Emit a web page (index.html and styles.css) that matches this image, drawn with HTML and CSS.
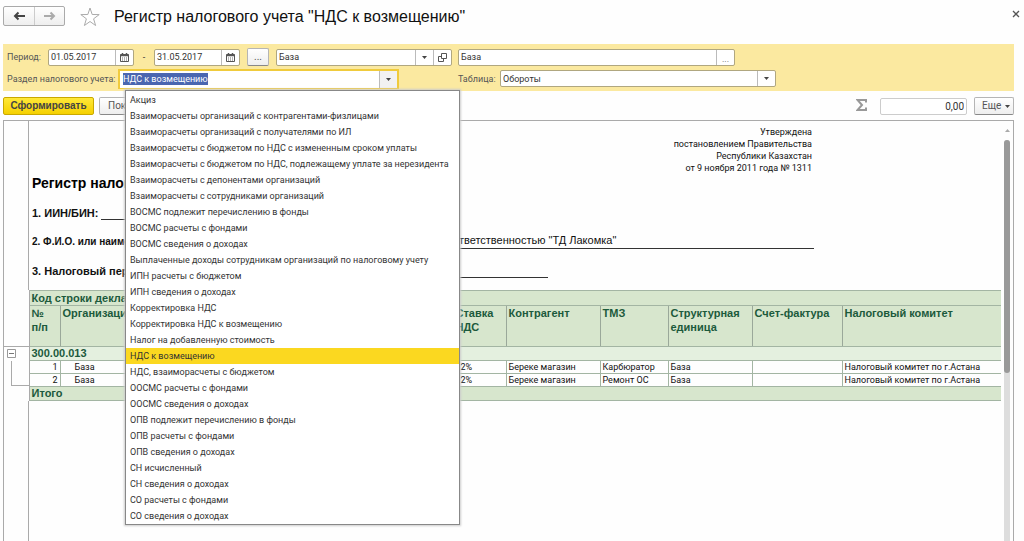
FILE: index.html
```html
<!DOCTYPE html>
<html lang="ru">
<head>
<meta charset="utf-8">
<title>Регистр налогового учета "НДС к возмещению"</title>
<link rel="stylesheet" href="styles.css">
</head>
<body>
<header class="titlebar">
  <div class="nav">
    <button class="nav-btn" aria-label="Назад"><svg width="12" height="10" viewBox="0 0 12 10"><path d="M12 5H3M5.500 1.500L2 5l3.500 3.500" fill="none" stroke="#444" stroke-width="2"/></svg></button>
    <button class="nav-btn" aria-label="Вперед"><svg width="12" height="10" viewBox="0 0 12 10"><path d="M0 5H9M6.500 1.500L10 5l-3.500 3.500" fill="none" stroke="#aaa" stroke-width="2"/></svg></button>
  </div>
  <button class="plain star" aria-label="В избранное"><svg width="20" height="19" viewBox="0 0 20 19"><path d="M10 1l2.200 6.500 7 .1-5.600 4.200 2 6.700-5.600-4-5.600 4 2-6.700L.8 7.600l7-.1z" fill="#fff" stroke="#aaa"/></svg></button>
  <h1 class="title">Регистр налогового учета "НДС к возмещению"</h1>
  <button class="plain close" aria-label="Закрыть"><svg width="8" height="8" viewBox="0 0 8 8"><path d="M1 1l6 6M7 1L1 7" stroke="#555" stroke-width="1.300"/></svg></button>
</header>

<main class="page">
  <form class="filters">
    <div class="row">
      <div class="side">
        <label class="period-label" for="from">Период:</label>
        <div class="field date"><input id="from" type="text" value="01.05.2017"><button type="button" aria-label="Календарь"><svg width="9" height="9" viewBox="0 0 9 9"><path d="M.5 1.500h8v7h-8z" fill="#fff" stroke="#555"/><path d="M0 2.500h9M2.500 0v2M6.500 0v2" stroke="#555" stroke-width="1.500"/><path d="M2 5h5M2 7h5" stroke="#666" stroke-dasharray="1 1"/></svg></button></div>
        <span class="dash">-</span>
        <div class="field date"><input aria-label="Конец периода" type="text" value="31.05.2017"><button type="button" aria-label="Календарь"><svg width="9" height="9" viewBox="0 0 9 9"><path d="M.5 1.500h8v7h-8z" fill="#fff" stroke="#555"/><path d="M0 2.500h9M2.500 0v2M6.500 0v2" stroke="#555" stroke-width="1.500"/><path d="M2 5h5M2 7h5" stroke="#666" stroke-dasharray="1 1"/></svg></button></div>
        <button type="button" class="btn dots">...</button>
        <div class="field org"><input aria-label="Организация" type="text" value="База"><button type="button" aria-label="Выбрать"><svg width="5" height="3" viewBox="0 0 5 3"><path d="M0 0h5L2.500 3z" fill="#444"/></svg></button><button type="button" aria-label="Открыть"><svg width="9" height="9" viewBox="0 0 9 9"><path d="M3.500.5h5v5h-5zM3.500 3.500h-3v5h5v-3" fill="none" stroke="#555"/></svg></button></div>
      </div>
      <div class="field unit"><input aria-label="Подразделение" type="text" value="База"><button type="button" class="low">...</button></div>
    </div>
    <div class="row">
      <div class="side">
        <label class="section-label" for="section">Раздел налогового учета:</label>
        <div class="combo">
          <div class="focus-box"><input id="section" type="text" value="НДС к возмещению"><button type="button" aria-label="Список"><svg width="5" height="3" viewBox="0 0 5 3"><path d="M0 0h5L2.500 3z" fill="#444"/></svg></button></div>
          <ul class="menu" role="listbox" aria-label="Раздел налогового учета">
            <li role="option">Акциз</li>
            <li role="option">Взаиморасчеты организаций с контрагентами-физлицами</li>
            <li role="option">Взаиморасчеты организаций с получателями по ИЛ</li>
            <li role="option">Взаиморасчеты с бюджетом по НДС с измененным сроком уплаты</li>
            <li role="option">Взаиморасчеты с бюджетом по НДС, подлежащему уплате за нерезидента</li>
            <li role="option">Взаиморасчеты с депонентами организаций</li>
            <li role="option">Взаиморасчеты с сотрудниками организаций</li>
            <li role="option">ВОСМС подлежит перечислению в фонды</li>
            <li role="option">ВОСМС расчеты с фондами</li>
            <li role="option">ВОСМС сведения о доходах</li>
            <li role="option">Выплаченные доходы сотрудникам организаций по налоговому учету</li>
            <li role="option">ИПН расчеты с бюджетом</li>
            <li role="option">ИПН сведения о доходах</li>
            <li role="option">Корректировка НДС</li>
            <li role="option">Корректировка НДС к возмещению</li>
            <li role="option">Налог на добавленную стоимость</li>
            <li role="option" class="current" aria-selected="true">НДС к возмещению</li>
            <li role="option">НДС, взаиморасчеты с бюджетом</li>
            <li role="option">ООСМС расчеты с фондами</li>
            <li role="option">ООСМС сведения о доходах</li>
            <li role="option">ОПВ подлежит перечислению в фонды</li>
            <li role="option">ОПВ расчеты с фондами</li>
            <li role="option">ОПВ сведения о доходах</li>
            <li role="option">СН исчисленный</li>
            <li role="option">СН сведения о доходах</li>
            <li role="option">СО расчеты с фондами</li>
            <li role="option">СО сведения о доходах</li>
          </ul>
        </div>
      </div>
      <label class="table-label" for="table">Таблица:</label>
      <div class="field kind"><select id="table"><option>Обороты</option></select><span class="arrow"><svg width="5" height="3" viewBox="0 0 5 3"><path d="M0 0h5L2.500 3z" fill="#444"/></svg></span></div>
    </div>
  </form>

  <div class="toolbar">
    <button class="btn primary">Сформировать</button>
    <button class="btn">Показать</button>
    <svg class="sigma" width="11" height="12" viewBox="0 0 11 12"><path d="M10 3.500V1H1.500L6 6l-4.500 5H10V8.500" fill="none" stroke="#999" stroke-width="2"/></svg>
    <input class="sum" aria-label="Сумма" type="text" value="0,00">
    <button class="btn more">Еще <svg width="5" height="3" viewBox="0 0 5 3"><path d="M0 0h5L2.500 3z" fill="#444"/></svg></button>
  </div>

  <section class="report">
    <div class="sheet">
      <div class="doc">
        <p class="approved">Утверждена<br>постановлением Правительства<br>Республики Казахстан<br>от 9 ноября 2011 года № 1311</p>
        <h2 class="doc-title">Регистр налогового учета</h2>
        <div class="line"><b>1. ИИН/БИН:</b><span class="blank iin"></span></div>
        <div class="line"><b class="long">2. Ф.И.О. или наименование</b><span class="blank name">ответственностью "ТД Лакомка"</span></div>
        <div class="line"><b>3. Налоговый период</b><span class="blank tax"></span></div>
      </div>
      <table class="grid">
        <colgroup><col class="c-tree"><col class="c-num"><col class="c-org"><col class="c-rate"><col class="c-agent"><col class="c-goods"><col class="c-unit"><col class="c-inv"><col></colgroup>
        <thead>
          <tr class="code"><td class="tree"></td><th colspan="8">Код строки декларации</th></tr>
          <tr class="heads"><td class="tree"></td><th>№<br>п/п</th><th>Организация</th><th>Ставка НДС</th><th>Контрагент</th><th>ТМЗ</th><th>Структурная единица</th><th>Счет-фактура</th><th>Налоговый комитет</th></tr>
        </thead>
        <tbody>
          <tr class="group"><td class="tree"><button class="fold" aria-label="Свернуть"><svg width="9" height="9" viewBox="0 0 9 9"><path d="M.5.5h8v8h-8z" fill="#fff" stroke="#999"/><path d="M2 4.500h5" stroke="#777"/></svg></button></td><th colspan="8">300.00.013</th></tr>
          <tr class="item"><td class="tree"><div class="branch"></div></td><td class="num">1</td><td class="org-cell">База</td><td>12%</td><td>Береке магазин</td><td>Карбюратор</td><td>База</td><td></td><td>Налоговый комитет по г.Астана</td></tr>
          <tr class="item"><td class="tree"><div class="branch end"></div></td><td class="num">2</td><td class="org-cell">База</td><td>12%</td><td>Береке магазин</td><td>Ремонт ОС</td><td>База</td><td></td><td>Налоговый комитет по г.Астана</td></tr>
          <tr class="total"><td class="tree"></td><th colspan="8">Итого</th></tr>
        </tbody>
      </table>
      <div class="rest"></div>
    </div>
    <div class="scroll"><svg width="5" height="3" viewBox="0 0 5 3"><path d="M0 3h5L2.500 0z" fill="#aaa"/></svg><div class="track"><div class="thumb"></div></div></div>
  </section>
</main>
<script src="script.js"></script>
</body>
</html>
```
FILE: styles.css
```css
* { box-sizing: border-box; }
body {
  margin: 0;
  height: 100vh;
  overflow: hidden;
  display: flex;
  flex-direction: column;
  background: #fefefe;
  color: #333;
  font: 9px/12px Roboto, "Liberation Sans", Arial, sans-serif;
}
button, input, select { font: inherit; color: inherit; margin: 0; }
button { padding: 0; }
svg { display: block; flex: none; }

.titlebar { display: flex; align-items: flex-start; padding: 6px 4px 0 3px; height: 44px; }
.nav { display: flex; height: 20px; border: 1px solid #aaa; border-radius: 2px; background: linear-gradient(#fff, #eee); }
.nav-btn { width: 30px; border: 0; background: none; display: grid; place-items: center; }
.nav-btn + .nav-btn { border-left: 1px solid #ccc; }
.plain { border: 0; background: none; }
.star { margin: 1px 14px 0 15px; }
.title { margin: 0; font: 400 16px/22px "Liberation Sans", Arial, sans-serif; color: #111; flex: 1; }
.close { margin-top: 4px; }

.page { flex: 1; min-height: 0; display: flex; flex-direction: column; margin: 0 10px 0 3px; }
.filters { background: #fbe9a0; padding: 4px 4px 3px; display: flex; flex-direction: column; gap: 3px; }
.row { display: flex; align-items: center; height: 18px; }
.row + .row { height: 19px; }
.side { display: flex; align-items: center; width: 451px; }
.period-label { width: 41px; color: #555; }
.section-label { width: 111px; color: #555; white-space: nowrap; }
.table-label { width: 42px; color: #555; white-space: nowrap; }
.field { display: flex; height: 17px; border: 1px solid #b0a780; border-radius: 2px; background: #fff; overflow: hidden; }
.field input, .field select, .focus-box input { flex: 1; min-width: 0; border: 0; padding: 0 2px; background: none; outline: 0; appearance: none; }
.field button, .arrow, .focus-box button { width: 18px; border: 0; border-left: 1px solid #bbb; background: none; display: grid; place-items: center; }
.field .low { align-items: end; color: #666; }
.date { width: 86px; }
.dash { width: 20px; text-align: center; }
.org { width: 176px; }
.unit { width: 277px; }
.kind { width: 276px; }
.btn { height: 18px; border: 1px solid #b5b5b5; border-bottom-color: #888; border-radius: 2px; background: linear-gradient(#fff, #eee); padding: 0 8px; white-space: nowrap; font-size: 10px; color: #555; }
.dots { width: 22px; margin: 0 7px; padding: 0; }

.combo { position: relative; width: 281px; }
.focus-box { display: flex; height: 20px; border: 2px solid #f0cb3d; border-bottom-width: 1px; background: #fff; padding-left: 1px; }
.focus-box button { background: #f2f2f2; }
.focus-box input::selection { background: #4a66b0; color: #fff; }
.menu { position: absolute; z-index: 2; left: 7px; top: 21px; width: 335px; margin: 0; padding: 1px 0 0; list-style: none; background: #fff; border: 1px solid #888; box-shadow: 0 0 2px 1px #ccc; color: #333; }
.menu li { padding: 0 4px; line-height: 16px; white-space: nowrap; }
.menu .current { background: #fbd820; }

.toolbar { display: flex; align-items: center; gap: 5px; padding: 6px 0 5px; }
.primary { width: 91px; padding: 0; background: linear-gradient(#ffe838, #f5d000); border-color: #c9a800; font-family: "Liberation Sans", Arial, sans-serif; font-weight: 700; color: #444; }
.sigma { margin: 0 8px 3px auto; }
.sum { width: 87px; height: 17px; border: 1px solid #ccc; border-radius: 2px; text-align: right; padding: 0 2px; margin-right: 2px; font-size: 10px; }
.more { display: flex; align-items: center; gap: 4px; width: 40px; padding: 0 5px 0 7px; }

.report { flex: 1; min-height: 0; display: flex; border: 1px solid #aaa; border-bottom: 0; overflow: hidden; }
.sheet { flex: 1; display: flex; flex-direction: column; color: #111; }
.doc { margin-left: 24px; border-left: 1px solid #aaa; padding: 5px 0 11px 3px; font-family: "Liberation Sans", Arial, sans-serif; }
.approved { width: 780px; margin: 0; text-align: right; font-family: Roboto, "Liberation Sans", sans-serif; }
.doc-title { margin: 0 0 12px; font-size: 14px; line-height: 18px; color: #000; }
.line { display: flex; align-items: center; height: 17px; margin-bottom: 12px; font-size: 11px; white-space: nowrap; width: 782px; }
.line:last-child { margin-bottom: 0; }
.long { font-size: 10px; width: 150px; }
.blank { border-bottom: 1px solid #333; height: 15px; margin-left: 3px; }
.iin { width: 200px; }
.name { flex: 1; padding-left: 268px; }
.tax { width: 396px; }

.grid { width: 100%; table-layout: fixed; border-collapse: collapse; }
.c-tree { width: 25px; }
.c-num { width: 31px; }
.c-org { width: 393px; }
.c-rate { width: 53px; }
.c-agent { width: 94px; }
.c-goods { width: 68px; }
.c-unit { width: 84px; }
.c-inv { width: 90px; }
.grid th, .grid td { border: 1px solid #a3b5a3; padding: 0 2px; text-align: left; vertical-align: top; font-weight: 400; overflow: hidden; white-space: nowrap; }
.grid th { background: #d7e6cd; color: #1c5a3c; font: 700 11px/14px "Liberation Sans", Arial, sans-serif; white-space: normal; border-right-color: #9aa89a; }
.grid .code th { height: 15px; }
.grid .heads th { height: 41px; }
.grid .group th { background: #e4f0df; height: 14px; line-height: 13px; }
.grid .total th { height: 14px; line-height: 13px; }
.grid .item td { height: 13px; line-height: 12px; }
.grid .item .num { text-align: right; }
.grid .item .org-cell { padding-left: 14px; }
.grid td.tree { border-width: 0 1px 0 0; border-color: #aaa; padding: 0; }
.grid .group td.tree { border-top: 1px solid #aaa; }
.grid tr > :last-child { border-right: 0; }
.fold { border: 0; background: none; display: block; margin: 2px 0 0 3px; }
.branch { margin-left: 7px; height: 13px; border-left: 1px solid #aaa; }
.branch.end { height: 12px; border-bottom: 1px solid #aaa; }
.rest { flex: 1; margin-left: 24px; border-left: 1px solid #aaa; }
.scroll { width: 12px; display: flex; flex-direction: column; align-items: center; padding-top: 8px; gap: 8px; }
.track { width: 6px; flex: 1; background: #ddd; border-radius: 3px 3px 0 0; }
.thumb { height: 58%; background: #999; border-radius: 3px; }
```
FILE: script.js
```js
const section = document.getElementById('section');
section.focus();
section.select();
```
